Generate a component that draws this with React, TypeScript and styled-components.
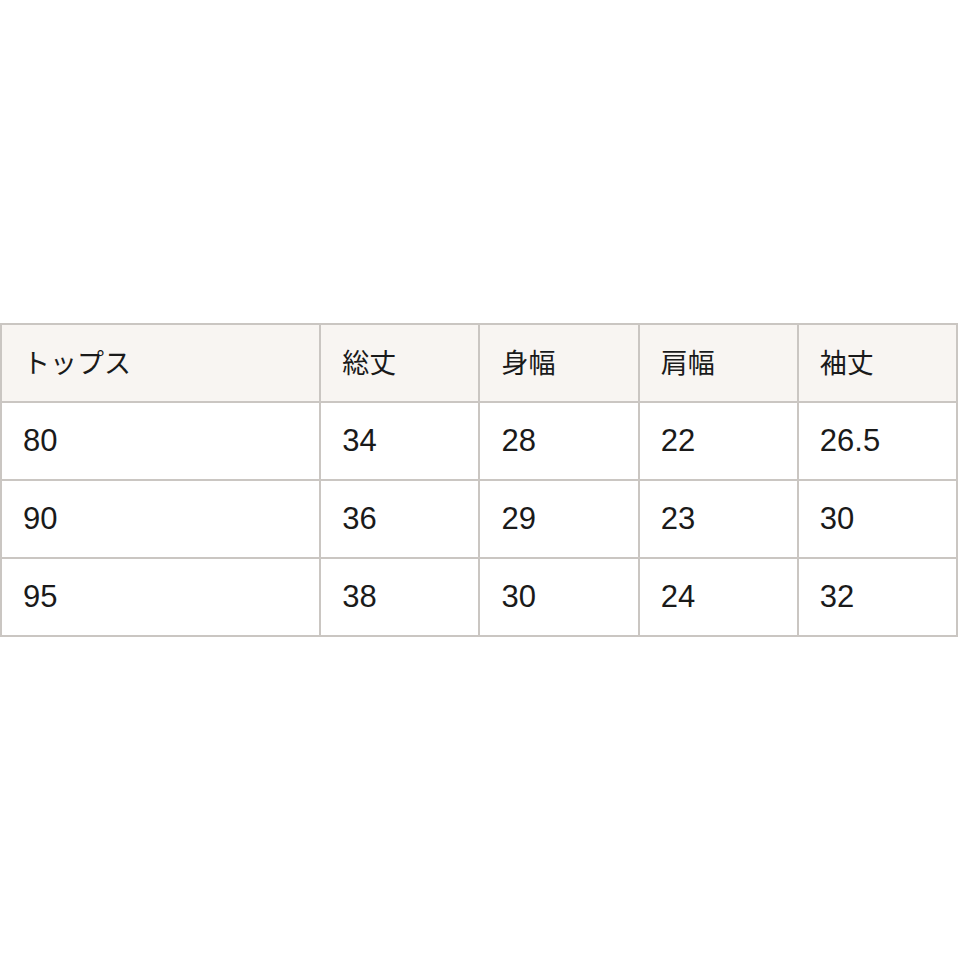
import * as React from 'react';
import styled, { createGlobalStyle } from 'styled-components';

const GlobalStyle = createGlobalStyle`
	html, body {
		margin: 0;
		padding: 0;
		background: #ffffff;
	}
`;

const Page = styled.div`
	width: 960px;
	height: 960px;
	padding-top: 323px;
	box-sizing: border-box;
`;

const SizeTable = styled.table`
	width: 958px;
	border-collapse: collapse;
	table-layout: fixed;
	font-family: 'Liberation Sans', 'Noto Sans CJK JP', sans-serif;
	color: #1a1a1a;
`;

const Col = styled.col<{ $wide?: boolean }>`
	width: ${(p) => (p.$wide ? '319px' : '159px')};
`;

const Cell = styled.td<{ $head?: boolean }>`
	height: 78px;
	padding: ${(p) => (p.$head ? '0 0 4px 21px' : '0 0 0 21px')};
	border: 2px solid #cac6c2;
	background: ${(p) => (p.$head ? '#f8f5f2' : '#ffffff')};
	font-size: ${(p) => (p.$head ? '27px' : '31px')};
	font-weight: normal;
	text-align: left;
	vertical-align: middle;
	box-sizing: border-box;
`;

const headers = ['トップス', '総丈', '身幅', '肩幅', '袖丈'];

const rows = [
	['80', '34', '28', '22', '26.5'],
	['90', '36', '29', '23', '30'],
	['95', '38', '30', '24', '32'],
];

const App = () => {
	return (
		<>
			<GlobalStyle />
			<Page>
				<SizeTable>
					<colgroup>
						<Col $wide />
						<Col />
						<Col />
						<Col />
						<Col />
					</colgroup>
					<tbody>
						<tr>
							{headers.map((h) => (
								<Cell key={h} as="th" $head>
									{h}
								</Cell>
							))}
						</tr>
						{rows.map((r, i) => (
							<tr key={i}>
								{r.map((v, j) => (
									<Cell key={j}>{v}</Cell>
								))}
							</tr>
						))}
					</tbody>
				</SizeTable>
			</Page>
		</>
	);
};

export default App;
